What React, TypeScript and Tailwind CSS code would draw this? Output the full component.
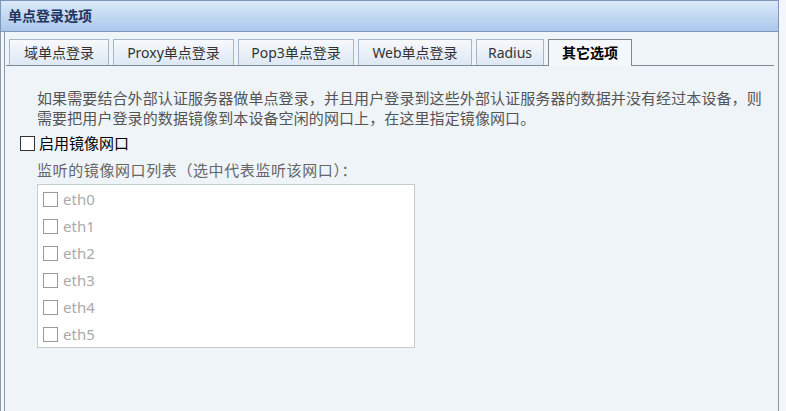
import React from 'react';

const tabs = [
  { label: '域单点登录', w: 'w-[100px]' },
  { label: 'Proxy单点登录', w: 'w-[121px]' },
  { label: 'Pop3单点登录', w: 'w-[116px]' },
  { label: 'Web单点登录', w: 'w-[114px]' },
  { label: 'Radius', w: 'w-[68px]' },
];

const ports = ['eth0', 'eth1', 'eth2', 'eth3', 'eth4', 'eth5'];

export default function App() {
  return (
    <div
      className="w-[786px] h-[411px] overflow-hidden bg-[#f3f7fb] text-[14px]"
      style={{ fontFamily: '"Noto Sans", "Noto Sans CJK SC", sans-serif' }}
    >
      {/* title bar */}
      <div className="h-[32px] w-[779px] border border-[#7c98b8] bg-gradient-to-b from-[#dce9f8] to-[#a9c8ec] flex items-center pl-[7px]">
        <span className="font-bold text-[14px] text-[#1d3560] leading-none">单点登录选项</span>
      </div>

      <div className="h-[379px] w-[779px] border-l border-[#8a98a8] pl-[3px]">
        <div className="h-full border-l border-r border-[#8a98a8] bg-[#eff4f9] pl-[1px] pr-[4px]">
          {/* tabs */}
          <div className="pt-[7px] border-b border-[#7f8893] flex gap-[4px] pl-[3px] h-[34px]">
            {tabs.map(t => (
              <div
                key={t.label}
                className={`${t.w} h-[26px] border border-b-0 border-[#a7b6c6] bg-gradient-to-b from-[#f7f9fc] to-[#dde8f4] flex items-center justify-center text-[#333] leading-none`}
              >
                {t.label}
              </div>
            ))}
            <div className="w-[84px] h-[27px] border border-b-0 border-[#7f8893] bg-[#f4f7fb] flex items-center justify-center font-bold text-black leading-none relative z-10">
              其它选项
            </div>
          </div>

          {/* content */}
          <div className="pt-[22px]">
            <p className="pl-[31px] text-[15px] tracking-[0.1px] leading-[20px] text-[#555]">
              如果需要结合外部认证服务器做单点登录，并且用户登录到这些外部认证服务器的数据并没有经过本设备，则
              <br />
              需要把用户登录的数据镜像到本设备空闲的网口上，在这里指定镜像网口。
            </p>

            <label className="mt-[7px] pl-[14px] flex items-center gap-[4px] h-[16px]">
              <span className="w-[15px] h-[15px] border border-[#333] bg-white" />
              <span className="text-[15px] text-black leading-none">启用镜像网口</span>
            </label>

            <div className="mt-[9px] pl-[31px] text-[15px] tracking-[0.6px] text-[#666] leading-[20px]">
              监听的镜像网口列表（选中代表监听该网口）：
            </div>

            <div className="ml-[31px] mt-[4px] w-[378px] h-[164px] border border-[#c6cbd0] bg-white pt-[1px]">
              {ports.map(p => (
                <div key={p} className="h-[27px] flex items-center pl-[5px] gap-[5px]">
                  <span className="w-[15px] h-[15px] border border-[#999] bg-white" />
                  <span className="text-[#aaa] text-[15px] leading-none">{p}</span>
                </div>
              ))}
            </div>
          </div>
        </div>
      </div>
    </div>
  );
}
